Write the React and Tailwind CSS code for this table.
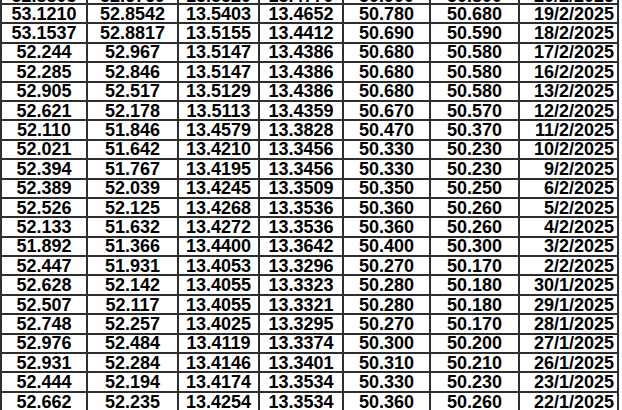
import React from "react";

const rows = [
  ["52.8803", "52.6769", "13.5520", "13.4770", "50.900", "50.800", "20/2/2025"],
  ["53.1210", "52.8542", "13.5403", "13.4652", "50.780", "50.680", "19/2/2025"],
  ["53.1537", "52.8817", "13.5155", "13.4412", "50.690", "50.590", "18/2/2025"],
  ["52.244", "52.967", "13.5147", "13.4386", "50.680", "50.580", "17/2/2025"],
  ["52.285", "52.846", "13.5147", "13.4386", "50.680", "50.580", "16/2/2025"],
  ["52.905", "52.517", "13.5129", "13.4386", "50.680", "50.580", "13/2/2025"],
  ["52.621", "52.178", "13.5113", "13.4359", "50.670", "50.570", "12/2/2025"],
  ["52.110", "51.846", "13.4579", "13.3828", "50.470", "50.370", "11/2/2025"],
  ["52.021", "51.642", "13.4210", "13.3456", "50.330", "50.230", "10/2/2025"],
  ["52.394", "51.767", "13.4195", "13.3456", "50.330", "50.230", "9/2/2025"],
  ["52.389", "52.039", "13.4245", "13.3509", "50.350", "50.250", "6/2/2025"],
  ["52.526", "52.125", "13.4268", "13.3536", "50.360", "50.260", "5/2/2025"],
  ["52.133", "51.632", "13.4272", "13.3536", "50.360", "50.260", "4/2/2025"],
  ["51.892", "51.366", "13.4400", "13.3642", "50.400", "50.300", "3/2/2025"],
  ["52.447", "51.931", "13.4053", "13.3296", "50.270", "50.170", "2/2/2025"],
  ["52.628", "52.142", "13.4055", "13.3323", "50.280", "50.180", "30/1/2025"],
  ["52.507", "52.117", "13.4055", "13.3321", "50.280", "50.180", "29/1/2025"],
  ["52.748", "52.257", "13.4025", "13.3295", "50.270", "50.170", "28/1/2025"],
  ["52.976", "52.484", "13.4119", "13.3374", "50.300", "50.200", "27/1/2025"],
  ["52.931", "52.284", "13.4146", "13.3401", "50.310", "50.210", "26/1/2025"],
  ["52.444", "52.194", "13.4174", "13.3534", "50.330", "50.230", "23/1/2025"],
  ["52.662", "52.235", "13.4254", "13.3534", "50.360", "50.260", "22/1/2025"],
];

export default function App() {
  return (
    <div className="w-[622px] h-[410px] overflow-hidden bg-white">
      <div
        className="mt-[-16.4px] w-[619px] grid grid-cols-[84px_89px_79px_82px_85px_87px_97px] auto-rows-[17.4px] gap-[2px] p-[2px] bg-[#2e2e2e] text-black font-bold text-[18px]"
        style={{ fontFamily: '"Liberation Sans", Arial, sans-serif' }}
      >
        {rows.map((r, i) =>
          r.map((c, j) => (
            <div
              key={i + "-" + j}
              className={
                (j === 6
                  ? "bg-white flex items-center justify-end pr-[3px] leading-none whitespace-nowrap"
                  : "bg-white flex items-center justify-center leading-none whitespace-nowrap") +
                (i === 0 ? " pt-[4px]" : "")
              }
            >
              {c}
            </div>
          ))
        )}
      </div>
    </div>
  );
}
